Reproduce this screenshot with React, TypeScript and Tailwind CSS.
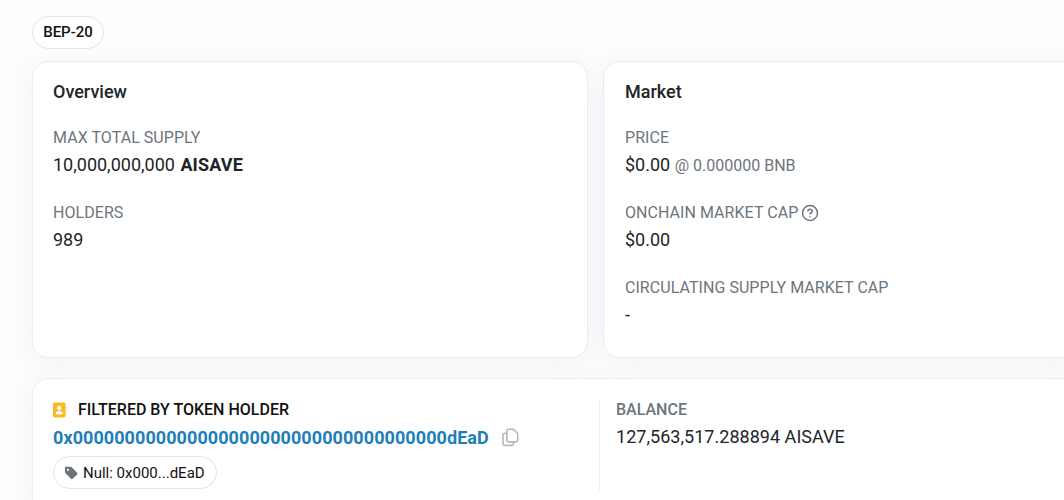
import { CircleHelp } from 'lucide-react'

function Stat({ label, children, help }: { label: string; children: React.ReactNode; help?: boolean }) {
  return (
    <div className="mb-[25px]">
      <div className="flex items-center gap-[3px] h-[22px] text-[16px] tracking-[0.05px] text-[#6c757d]">
        {label}
        {help && <CircleHelp size={18} strokeWidth={2} className="text-[#6c757d]" />}
      </div>
      <div className="mt-[4px] h-[24px] leading-[24px] text-[18px] text-[#212529]">{children}</div>
    </div>
  )
}

export default function App() {
  return (
    <div
      className="h-[500px] w-[1064px] overflow-hidden bg-[#fdfdfe] pl-8 pt-4 text-[#212529]"
      style={{ fontFamily: 'Roboto, sans-serif' }}
    >
      <div className="w-[1100px]">
        <span className="inline-flex h-[33px] w-[72px] items-center justify-center rounded-full border border-[#e2e4e8] bg-white text-[15px] font-medium text-[#111]">
          BEP-20
        </span>

        <div className="mt-[12px] flex gap-[15px]">
          <div className="h-[297px] w-[556px] rounded-[16px] border border-[#e9ecef] bg-white px-5 pt-[18px] shadow-[0_4px_24px_rgba(180,190,210,0.16)]">
            <h2 className="mb-[23px] h-[24px] leading-[24px] text-[18px] font-medium text-[#212529]">Overview</h2>
            <Stat label="MAX TOTAL SUPPLY">
              10,000,000,000 <b className="ml-px font-bold tracking-[0.15px]">AISAVE</b>
            </Stat>
            <Stat label="HOLDERS">989</Stat>
          </div>

          <div className="h-[297px] w-[480px] rounded-[16px] border border-[#e9ecef] bg-white pl-[21px] pr-5 pt-[18px] shadow-[0_4px_24px_rgba(180,190,210,0.16)]">
            <h2 className="mb-[23px] h-[24px] leading-[24px] text-[18px] font-medium text-[#212529]">Market</h2>
            <Stat label="PRICE">
              $0.00 <span className="text-[16px] text-[#6c757d]">@ 0.000000 BNB</span>
            </Stat>
            <Stat label="ONCHAIN MARKET CAP" help>
              $0.00
            </Stat>
            <Stat label="CIRCULATING SUPPLY MARKET CAP">-</Stat>
          </div>
        </div>

        <div className="mt-[20px] flex h-[140px] w-[1050px] rounded-[16px] border border-[#e9ecef] bg-white px-5 pt-[21px] shadow-[0_4px_24px_rgba(180,190,210,0.16)]">
          <div className="h-[90px] w-[547px] border-r border-[#e9ecef]">
            <div className="flex h-[19px] items-center gap-[11px] pt-px text-[16px] font-medium text-[#111]">
              <svg width="14" height="16" viewBox="0 0 14 16" className="shrink-0">
                <rect x="0" y="0.5" width="12.5" height="15" rx="2" fill="#fdb71e" />
                <path d="M13 2.5h1M13 5.5h1M13 8.5h1M13 11.5h1" stroke="#fdd98a" strokeWidth="1" />
                <circle cx="6.2" cy="6" r="2.3" fill="#fff" />
                <path d="M2.5 12.2c0-2.2 1.7-3.2 3.7-3.2s3.7 1 3.7 3.2z" fill="#fff" />
              </svg>
              FILTERED BY TOKEN HOLDER
            </div>
            <div className="mt-[6px] flex h-[24px] items-center">
              <span className="text-[18px] font-bold tracking-[0.07px] text-[#1e7fb8]">
                0x000000000000000000000000000000000000dEaD
              </span>
              <svg
                width="17"
                height="19"
                viewBox="0 0 17 19"
                fill="none"
                stroke="#b4b7bb"
                strokeWidth="1.6"
                strokeLinejoin="round"
                className="ml-[13px] shrink-0"
              >
                <path d="M6.5 1.3h5l4.2 4.2v6.8a1.6 1.6 0 0 1-1.6 1.6H6.5a1.6 1.6 0 0 1-1.6-1.6V2.9a1.6 1.6 0 0 1 1.6-1.6z" />
                <path d="M4.6 5.2H2.6A1.6 1.6 0 0 0 1 6.8v9a1.6 1.6 0 0 0 1.6 1.6h7.2a1.6 1.6 0 0 0 1.6-1.6v-1.6" />
              </svg>
            </div>
            <span className="mt-[7px] inline-flex h-[33px] items-center gap-[5px] rounded-full border border-[#e2e4e8] bg-white pl-[10px] pr-[11px] pt-px text-[15px] text-[#111]">
              <svg width="14" height="14" viewBox="0 0 14 14" className="shrink-0">
                <path
                  d="M1 1.2C1 .9 1.2.7 1.5.7h5c.4 0 .7.1 1 .4l5.6 5.6c.5.5.5 1.2 0 1.7l-4.4 4.4c-.5.5-1.2.5-1.7 0L1.4 7.2c-.3-.3-.4-.6-.4-1z"
                  fill="#6c757d"
                />
                <circle cx="4" cy="3.8" r="1.1" fill="#fff" />
              </svg>
              Null: 0x000...dEaD
            </span>
          </div>
          <div className="pl-[16px]">
            <div className="h-[19px] pt-px text-[16px] font-medium leading-[18px] text-[#6c757d]">BALANCE</div>
            <div className="mt-[6px] h-[24px] leading-[24px] text-[18px] tracking-[0.03px] text-[#212529]">
              127,563,517.288894 AISAVE
            </div>
          </div>
        </div>
      </div>
    </div>
  )
}
